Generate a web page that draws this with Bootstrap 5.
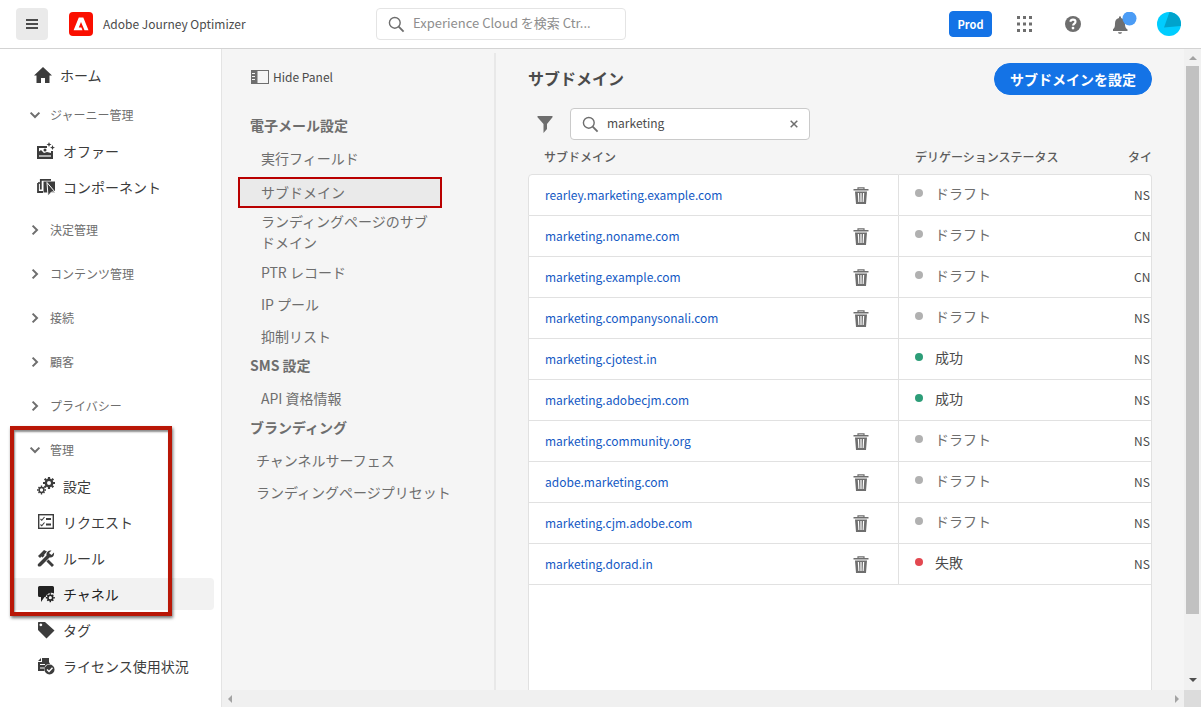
<!DOCTYPE html>
<html lang="ja">
<head>
<meta charset="utf-8">
<meta name="viewport" content="width=device-width, initial-scale=1">
<title>Adobe Journey Optimizer</title>
<link href="https://cdn.jsdelivr.net/npm/bootstrap@5.3.0/dist/css/bootstrap.min.css" rel="stylesheet">
<style>
  body { font-family: "Noto Sans CJK JP", sans-serif; font-size: 14px; line-height: 20px; color: #4b4b4b; background: #fff; }
  a { text-decoration: none; color: inherit; }
  svg { display: block; flex: none; }
  input::placeholder { color: #8e8e8e !important; opacity: 1; }

  .top-bar { height: 49px; border-bottom: 1px solid #d3d3d3; padding: 0 20px 0 16px; }
  .brand-side { width: 360px; gap: 21px; }
  .menu-btn { width: 32px; height: 32px; background: #eaeaea; border: 0; border-radius: 4px; padding: 8px; color: #4b4b4b; }
  .product-name { margin-left: -11px; font-size: 12px; }
  .search-box { height: 32px; background: #fff; border: 1px solid #e4e4e4; border-radius: 4px; padding: 0 11px; color: #6e6e6e; }
  .search-box input { border: 0; padding: 0 0 2px; background: none; outline: 0; flex: 1; min-width: 0; color: #4b4b4b; line-height: 20px; }
  .search-box button, .icon-btn { border: 0; background: none; padding: 0; color: #6e6e6e; }
  .top-search { width: 250px; font-size: 13px; }
  .table-search { width: 240px; border-color: #cacaca; font-size: 12px; }
  .prod-btn { --bs-btn-padding-y: 0; --bs-btn-padding-x: 0; --bs-btn-font-size: 11px; --bs-btn-bg: #1473e6; --bs-btn-border-color: #1473e6; --bs-btn-font-weight: 700; --bs-btn-border-radius: 4px; width: 43px; height: 26px; }
  .avatar-btn { margin-left: 20px; }

  .side-nav { width: 222px; border-right: 1px solid #e4e4e4; padding: 8px 7px 0 12px; }
  .home-row, .side-row, .group-row { display: flex; align-items: center; border-radius: 4px; color: #3c3c3c; }
  .home-row { height: 36px; padding-left: 22px; gap: 8px; margin-bottom: 4px; }
  .side-row { height: 32px; margin-bottom: 4px; padding-left: 25px; gap: 8px; }
  .side-row.active { background: #f2f2f2; color: #222; }
  .group-row { height: 36px; width: 100%; margin-bottom: 8px; padding: 0 0 0 17px; gap: 9px; font-size: 12px; color: #6e6e6e; border: 0; background: none; }
  .group-row.open { margin-bottom: 2px; }
  .side-row-last { margin-bottom: 9px; }
  .callout-frame { position: absolute; top: -6px; bottom: -6px; left: -2px; width: 162px; border: 4px solid #b91707; box-shadow: 1px 2px 3px rgba(0,0,0,.55), inset 1px 2px 2px rgba(0,0,0,.45); pointer-events: none; }

  .work-area { background: #f5f5f5; min-width: 0; }
  .settings-panel { width: 274px; flex: none; padding: 14px 16px 0; margin-top: 4px; border-right: 2px solid #e8e8e8; color: #6e6e6e; }
  .hide-panel { gap: 4px; margin: 0 0 26px 13px; color: #4b4b4b; height: 20px; border: 0; background: none; padding: 0; font-size: 12px; }
  .settings-panel h2 { font-size: 14px; font-weight: 700; line-height: 24px; margin: 0 0 6px 12px; }
  .settings-panel ul { margin: 0; padding: 0; list-style: none; }
  .settings-panel li a { display: block; line-height: 21px; padding: 5px 8px 6px 23px; width: 204px; }
  .settings-panel li a.two-line { padding: 3px 10px 4px 23px; }
  .settings-panel li a.chosen { padding: 3px 8px 4px 21px; margin-top: 2px; border: 2px solid #b90000; background: #eaeaea; line-height: 20px; }
  .settings-panel ul.branding a { padding-left: 18px; width: 230px; }

  .main-col { padding: 14px 32px 0; min-width: 0; }
  .main-col h1 { font-size: 16px; line-height: 30px; font-weight: 700; margin: 0; }
  .cta { --bs-btn-bg: #1473e6; --bs-btn-border-color: #1473e6; --bs-btn-font-size: 14px; --bs-btn-font-weight: 700; --bs-btn-line-height: 20px; --bs-btn-padding-x: 15px; --bs-btn-padding-y: 4px; padding-top: 3px; height: 32px; border-radius: 16px; }
  .filter-row { margin-top: 13px; gap: 17px; padding-left: 9px; }
  .domain-area { overflow: hidden; min-height: 0; }
  .domains { width: 100%; table-layout: fixed; border-collapse: separate; border-spacing: 0; }
  .domains th { height: 34px; padding: 0 0 0 16px; font-size: 12px; font-weight: 500; color: #5c5c5c; white-space: nowrap; }
  .domains td { height: 41px; padding: 0 0 0 16px; background: #fff; border-bottom: 1px solid #e1e1e1; white-space: nowrap; font-size: 12px; }
  .domains tr > :last-child { padding-left: 0; }
  .domains tbody tr:first-child td { height: 42px; border-top: 1px solid #e1e1e1; }
  .domains td:first-child { border-left: 1px solid #e1e1e1; border-right: 1px solid #e1e1e1; }
  .domains tbody td:last-child { border-right: 1px solid #e1e1e1; padding-left: 6px; }
  .domains tbody tr:first-child td:first-child { border-top-left-radius: 4px; }
  .domains tbody tr:first-child td:last-child { border-top-right-radius: 4px; }
  .col-name { width: 371px; } .col-kind { width: 24px; }
  .domains td a { color: #1459c4; }
  .domains .icon-btn { margin-right: 29px; }
  .state { display: flex; align-items: center; gap: 12px; padding-bottom: 5px; color: #6e6e6e; font-size: 14px; }
  .state::before { content: ""; width: 8px; height: 8px; border-radius: 50%; background: #b1b1b1; }
  .state.ok, .state.bad { color: #4b4b4b; }
  .state.ok::before { background: #2d9d78; }
  .state.bad::before { background: #e34850; }
  .empty-fill { background: #fff; border: 1px solid #e1e1e1; border-width: 0 1px; }

  .bar-v { width: 17px; background: #f1f1f1; padding: 5px 2px 6px; color: #a3a3a3; }
  .bar-v .thumb { flex: 0 0 87%; width: 13px; background: #c1c1c1; }
  .bar-h { height: 17px; background: #f0f0f0; color: #a3a3a3; }
  .bar-h .track { padding: 0 5px 0 6px; }
  .bar-h .corner { width: 17px; background: #dcdcdc; }
</style>
</head>
<body>
<svg width="0" height="0" class="position-absolute" aria-hidden="true">
  <symbol id="i-down" viewBox="0 0 12 12"><path d="M1.600 3.600 6 8l4.400-4.400" fill="none" stroke="currentColor" stroke-width="2"/></symbol>
  <symbol id="i-right" viewBox="0 0 12 12"><path d="M3.600 1.600 8 6l-4.400 4.400" fill="none" stroke="currentColor" stroke-width="2"/></symbol>
  <symbol id="i-search" viewBox="0 0 18 18"><g fill="none" stroke="currentColor" stroke-width="1.500"><circle cx="7.200" cy="7.200" r="5.700"/><path d="m11.300 11.300 5.200 5.200" stroke-width="2"/></g></symbol>
  <symbol id="i-trash" viewBox="0 0 16 17"><path d="M5 2V.8h6V2" fill="none" stroke="currentColor" stroke-width="1.200"/><path d="M.5 2h15v1.600h-15zM2 4.500h12L13 17H3zm2.800 1.500.5 9h1.100L6 6zm2.600 0v9h1.200V6zm2.600 0-.4 9h1.100l.5-9z" fill="currentColor" fill-rule="evenodd"/></symbol>
</svg>

<div class="d-flex flex-column vh-100 overflow-hidden">
  <header class="top-bar d-flex align-items-center flex-shrink-0">
    <div class="brand-side d-flex align-items-center">
      <button class="menu-btn" aria-label="メニュー"><svg width="16" height="16" viewBox="0 0 16 16"><path d="M2 4h12M2 8h12M2 12h12" stroke="currentColor" stroke-width="2"/></svg></button>
      <svg width="24" height="24" viewBox="0 0 24 24"><rect width="24" height="24" rx="4" fill="#fa0f00"/><path d="M9.800 5.500h4.500l5.200 12.800h-4L12 10l-2.200 5.500h2.600l1.100 2.800H4.600z" fill="#fff"/></svg>
      <span class="product-name">Adobe Journey Optimizer</span>
    </div>
    <div class="search-box top-search d-flex align-items-center gap-2">
      <svg width="17" height="17"><use href="#i-search"/></svg>
      <input type="text" aria-label="Experience Cloud を検索" placeholder="Experience Cloud を検索 Ctr...">
    </div>
    <div class="d-flex align-items-center ms-auto">
      <button class="btn btn-primary prod-btn">Prod</button>
      <button class="icon-btn ms-4" aria-label="アプリ"><svg width="17" height="18" viewBox="0 0 17 18"><path d="M1 1h3v3H1zM7 1h3v3H7zM13 1h3v3h-3zM1 7.500h3v3H1zM7 7.500h3v3H7zM13 7.500h3v3h-3zM1 14h3v3H1zM7 14h3v3H7zM13 14h3v3h-3z" fill="currentColor"/></svg></button>
      <button class="icon-btn ms-4 px-2" aria-label="ヘルプ"><svg width="16" height="16" viewBox="0 0 16 16"><circle cx="8" cy="8" r="8" fill="currentColor"/><path d="M5.300 5.700C5.600 4.200 6.800 3.600 8 3.600c1.500 0 2.500.9 2.500 2.100 0 1.900-2.400 1.900-2.400 3.900" fill="none" stroke="#fff" stroke-width="2.100"/><circle cx="8" cy="12.100" r="1.400" fill="#fff"/></svg></button>
      <button class="icon-btn ms-4" aria-label="通知"><svg width="24" height="24" viewBox="0 0 24 24"><path d="M6 4.500h2V6c2.600.5 4 2.500 4 5.500 0 3.500.6 4.800 2.500 6v1.500H-.3v-1.500C1.500 16.300 2 15 2 11.500 2 8.500 3.400 6.500 6 6zM5 20.300h4c-.3 2-3.700 2-4 0z" fill="currentColor"/><circle cx="16.500" cy="6.500" r="7" fill="#4b9cf5"/></svg></button>
      <button class="icon-btn avatar-btn" aria-label="アカウント"><svg width="24" height="24" viewBox="0 0 24 24"><circle cx="12" cy="12" r="12" fill="#00cdff"/><path d="M12.500 0A12 12 0 0 1 23.800 14L7 15.500z" fill="#00a3cc"/></svg></button>
    </div>
  </header>

  <div class="d-flex flex-grow-1 overflow-hidden">
    <nav class="side-nav flex-shrink-0">
      <a href="#" class="home-row"><svg width="18" height="16" viewBox="0 0 18 16"><path d="M9 0 0 8.500h2.500V16H7v-5h4v5h4.500V8.500H18z" fill="currentColor"/></svg>ホーム</a>

      <button class="group-row open"><svg width="12" height="12"><use href="#i-down"/></svg>ジャーニー管理</button>
      <a href="#" class="side-row"><svg width="18" height="18" viewBox="0 0 18 18"><path d="M0 4h10v2H2v7h12V9h2v8H0z" fill="currentColor"/><path d="M2 12V9.500L4 8l3 3 3-1 4 1v2H2zM0 13h16v4H0z" fill="currentColor"/><path d="M2 14h12" stroke="#fff" stroke-width="1.200"/><circle cx="8" cy="8" r="1.500" fill="currentColor"/><path d="m12 0 .7 1.800 1.800.7-1.800.7L12 5l-.7-1.800-1.800-.7 1.800-.7zM15.500 3l.8 1.900 1.700.6-1.700.7-.8 1.800-.8-1.800-1.700-.7 1.700-.6z" fill="currentColor"/></svg>オファー</a>
      <a href="#" class="side-row side-row-last"><svg width="18" height="18" viewBox="0 0 18 18"><path d="M1 5v9h5M3.800 11.500V1.800H14" fill="none" stroke="currentColor" stroke-width="1.800"/><path d="M1 5h2.500" stroke="currentColor" stroke-width="1.600"/><path d="M6.500 3.500H18v11H6.500z" fill="currentColor"/><path d="m10 4.500 8 9.500h-3.500L11 18z" fill="currentColor" stroke="#fff" stroke-width="1"/></svg>コンポーネント</a>

      <button class="group-row"><svg width="12" height="12"><use href="#i-right"/></svg>決定管理</button>
      <button class="group-row"><svg width="12" height="12"><use href="#i-right"/></svg>コンテンツ管理</button>
      <button class="group-row"><svg width="12" height="12"><use href="#i-right"/></svg>接続</button>
      <button class="group-row"><svg width="12" height="12"><use href="#i-right"/></svg>顧客</button>
      <button class="group-row"><svg width="12" height="12"><use href="#i-right"/></svg>プライバシー</button>

      <div class="position-relative">
        <button class="group-row open"><svg width="12" height="12"><use href="#i-down"/></svg>管理</button>
        <a href="#" class="side-row"><svg width="18" height="18" viewBox="0 0 18 18"><g transform="translate(12 6)" fill="none" stroke="currentColor"><circle r="3.200" stroke-width="2.400"/><path d="M0-6v2M0 4v2M-6 0h2M4 0h2M-4.300-4.300l1.500 1.500M2.800 2.800l1.500 1.500M4.300-4.300 2.800-2.800M-2.800 2.800l-1.500 1.500" stroke-width="2.200"/></g><g transform="translate(4.500 13)" fill="none" stroke="currentColor"><circle r="2.400" stroke-width="1.500"/><path d="M0-4.500V-3M0 3v1.500M-4.500 0H-3M3 0h1.500M-3-3l1 1M2 2l1 1M3-3 2-2M-2 2l-1 1" stroke-width="1.400"/></g></svg>設定</a>
        <a href="#" class="side-row"><svg width="18" height="18" viewBox="0 0 18 18"><g fill="none" stroke="currentColor"><rect x="1.700" y="1.700" width="14.600" height="13.600" stroke-width="1.400"/><path d="m3.500 6 1.300 1.300L7.500 4M3.500 11.500l1.300 1.300L7.500 9.500" stroke-width="1.100"/><path d="M9 6h5M9 11.500h5" stroke-width="2"/></g></svg>リクエスト</a>
        <a href="#" class="side-row"><svg width="18" height="18" viewBox="0 0 18 18"><path d="M2 6 7 1l3 1.500L7 6l10 10-2 2L4.500 7.500 3 9 1 7z" fill="currentColor"/><path d="M3 15 15 3" stroke="#fff" stroke-width="5.500"/><path d="m1 15 8.500-8.500c-.5-3 1.500-5.500 5-5L12 4l2.500 2 2.500-2.500c.5 3.500-1.500 5.500-4.500 5L4 17c-2 1.500-4 0-3-2z" fill="currentColor"/></svg>ルール</a>
        <a href="#" class="side-row active"><svg width="18" height="18" viewBox="0 0 18 18"><path d="M2.500 1h13A1.500 1.500 0 0 1 17 2.500v6A6 6 0 0 0 8.500 12H7.500L4 17v-5H2.500A1.500 1.500 0 0 1 1 10.500v-8A1.500 1.500 0 0 1 2.500 1z" fill="currentColor"/><g transform="translate(13.300 12.700)" fill="none" stroke="currentColor"><circle r="2.400" stroke-width="1.600"/><path d="M0-4.500V-3M0 3v1.500M-4.500 0H-3M3 0h1.500M-3-3l1 1M2 2l1 1M3-3 2-2M-2 2l-1 1" stroke-width="1.500"/></g></svg>チャネル</a>
        <div class="callout-frame"></div>
      </div>
      <a href="#" class="side-row"><svg width="18" height="18" viewBox="0 0 18 18"><path d="M1.500 1H8l9.500 8.500-8 8L1 9V1.500zm2.300 1.500a1.400 1.400 0 1 0 .1 0z" fill="currentColor"/></svg>タグ</a>
      <a href="#" class="side-row"><svg width="18" height="18" viewBox="0 0 18 18"><path d="M6 1h6v4l1 2c-4-.5-6.500 3-5.500 7H1V5h4V1zM1 4l3-3v3z" fill="currentColor"/><path d="M3 7.500h5M3 11h4" stroke="#fff" stroke-width="1.200"/><circle cx="12.500" cy="12.500" r="5" fill="currentColor"/><path d="m10 12.500 2 2 3.500-3.800" fill="none" stroke="#fff" stroke-width="1.400"/></svg>ライセンス使用状況</a>
    </nav>

    <div class="work-area d-flex flex-column flex-grow-1">
      <div class="d-flex flex-grow-1 overflow-hidden">
        <aside class="settings-panel">
          <button class="hide-panel d-flex align-items-center"><svg width="18" height="14" viewBox="0 0 18 14"><path d="M0 0h18v14H0zm6.500 1v12H17V1zM1 3v1h3V3zm0 3v1h3V6zm0 3v1h3V9z" fill="#6e6e6e" fill-rule="evenodd"/></svg>Hide Panel</button>
          <h2>電子メール設定</h2>
          <ul>
            <li><a href="#">実行フィールド</a></li>
            <li><a href="#" class="chosen">サブドメイン</a></li>
            <li><a href="#" class="two-line">ランディングページのサブドメイン</a></li>
            <li><a href="#">PTR レコード</a></li>
            <li><a href="#">IP プール</a></li>
            <li><a href="#">抑制リスト</a></li>
          </ul>
          <h2>SMS 設定</h2>
          <ul><li><a href="#">API 資格情報</a></li></ul>
          <h2>ブランディング</h2>
          <ul class="branding">
            <li><a href="#">チャンネルサーフェス</a></li>
            <li><a href="#">ランディングページプリセット</a></li>
          </ul>
        </aside>

        <main class="main-col d-flex flex-column flex-grow-1">
          <div class="d-flex justify-content-between">
            <h1>サブドメイン</h1>
            <button class="btn btn-primary cta">サブドメインを設定</button>
          </div>
          <div class="filter-row d-flex align-items-center">
            <button class="icon-btn" aria-label="フィルター"><svg width="16" height="17" viewBox="0 0 16 17"><path d="M.5 0h15v1.200L10 8v5l-3.500 4V8L.5 1.200z" fill="currentColor"/></svg></button>
            <div class="search-box table-search d-flex align-items-center gap-2">
              <svg width="17" height="17"><use href="#i-search"/></svg>
              <input type="text" aria-label="サブドメインを検索" value="marketing">
              <button aria-label="クリア"><svg width="8" height="8" viewBox="0 0 8 8"><path d="m.7.7 6.600 6.600m0-6.600L.7 7.300" stroke="currentColor" stroke-width="1.500"/></svg></button>
            </div>
          </div>
          <div class="domain-area d-flex flex-column flex-grow-1">
            <table class="domains">
              <colgroup><col class="col-name"><col><col class="col-kind"></colgroup>
              <thead><tr><th>サブドメイン</th><th>デリゲーションステータス</th><th>タイ</th></tr></thead>
              <tbody>
                <tr><td><div class="d-flex justify-content-between align-items-center"><a href="#">rearley.marketing.example.com</a><button class="icon-btn" aria-label="削除"><svg width="16" height="17"><use href="#i-trash"/></svg></button></div></td><td><span class="state">ドラフト</span></td><td>NS</td></tr>
                <tr><td><div class="d-flex justify-content-between align-items-center"><a href="#">marketing.noname.com</a><button class="icon-btn" aria-label="削除"><svg width="16" height="17"><use href="#i-trash"/></svg></button></div></td><td><span class="state">ドラフト</span></td><td>CN</td></tr>
                <tr><td><div class="d-flex justify-content-between align-items-center"><a href="#">marketing.example.com</a><button class="icon-btn" aria-label="削除"><svg width="16" height="17"><use href="#i-trash"/></svg></button></div></td><td><span class="state">ドラフト</span></td><td>CN</td></tr>
                <tr><td><div class="d-flex justify-content-between align-items-center"><a href="#">marketing.companysonali.com</a><button class="icon-btn" aria-label="削除"><svg width="16" height="17"><use href="#i-trash"/></svg></button></div></td><td><span class="state">ドラフト</span></td><td>NS</td></tr>
                <tr><td><a href="#">marketing.cjotest.in</a></td><td><span class="state ok">成功</span></td><td>NS</td></tr>
                <tr><td><a href="#">marketing.adobecjm.com</a></td><td><span class="state ok">成功</span></td><td>NS</td></tr>
                <tr><td><div class="d-flex justify-content-between align-items-center"><a href="#">marketing.community.org</a><button class="icon-btn" aria-label="削除"><svg width="16" height="17"><use href="#i-trash"/></svg></button></div></td><td><span class="state">ドラフト</span></td><td>NS</td></tr>
                <tr><td><div class="d-flex justify-content-between align-items-center"><a href="#">adobe.marketing.com</a><button class="icon-btn" aria-label="削除"><svg width="16" height="17"><use href="#i-trash"/></svg></button></div></td><td><span class="state">ドラフト</span></td><td>NS</td></tr>
                <tr><td><div class="d-flex justify-content-between align-items-center"><a href="#">marketing.cjm.adobe.com</a><button class="icon-btn" aria-label="削除"><svg width="16" height="17"><use href="#i-trash"/></svg></button></div></td><td><span class="state">ドラフト</span></td><td>NS</td></tr>
                <tr><td><div class="d-flex justify-content-between align-items-center"><a href="#">marketing.dorad.in</a><button class="icon-btn" aria-label="削除"><svg width="16" height="17"><use href="#i-trash"/></svg></button></div></td><td><span class="state bad">失敗</span></td><td>NS</td></tr>
              </tbody>
            </table>
            <div class="empty-fill flex-grow-1"></div>
          </div>
        </main>

        <div class="bar-v d-flex flex-column align-items-center flex-shrink-0">
          <svg class="mb-1" width="8" height="8" viewBox="0 0 8 8"><path d="m0 6 4-4 4 4z" fill="currentColor"/></svg>
          <div class="thumb"></div>
          <svg class="mt-auto" width="8" height="8" viewBox="0 0 8 8"><path d="m0 2 4 4 4-4z" fill="#4f4f4f"/></svg>
        </div>
      </div>
      <div class="bar-h d-flex flex-shrink-0">
        <div class="track d-flex flex-grow-1 justify-content-between align-items-center">
          <svg width="4" height="8" viewBox="0 0 4 8"><path d="M4 0 0 4l4 4z" fill="currentColor"/></svg>
          <svg width="4" height="8" viewBox="0 0 4 8"><path d="m0 0 4 4-4 4z" fill="currentColor"/></svg>
        </div>
        <div class="corner"></div>
      </div>
    </div>
  </div>
</div>
<script src="https://cdn.jsdelivr.net/npm/bootstrap@5.3.0/dist/js/bootstrap.bundle.min.js"></script>
</body>
</html>
